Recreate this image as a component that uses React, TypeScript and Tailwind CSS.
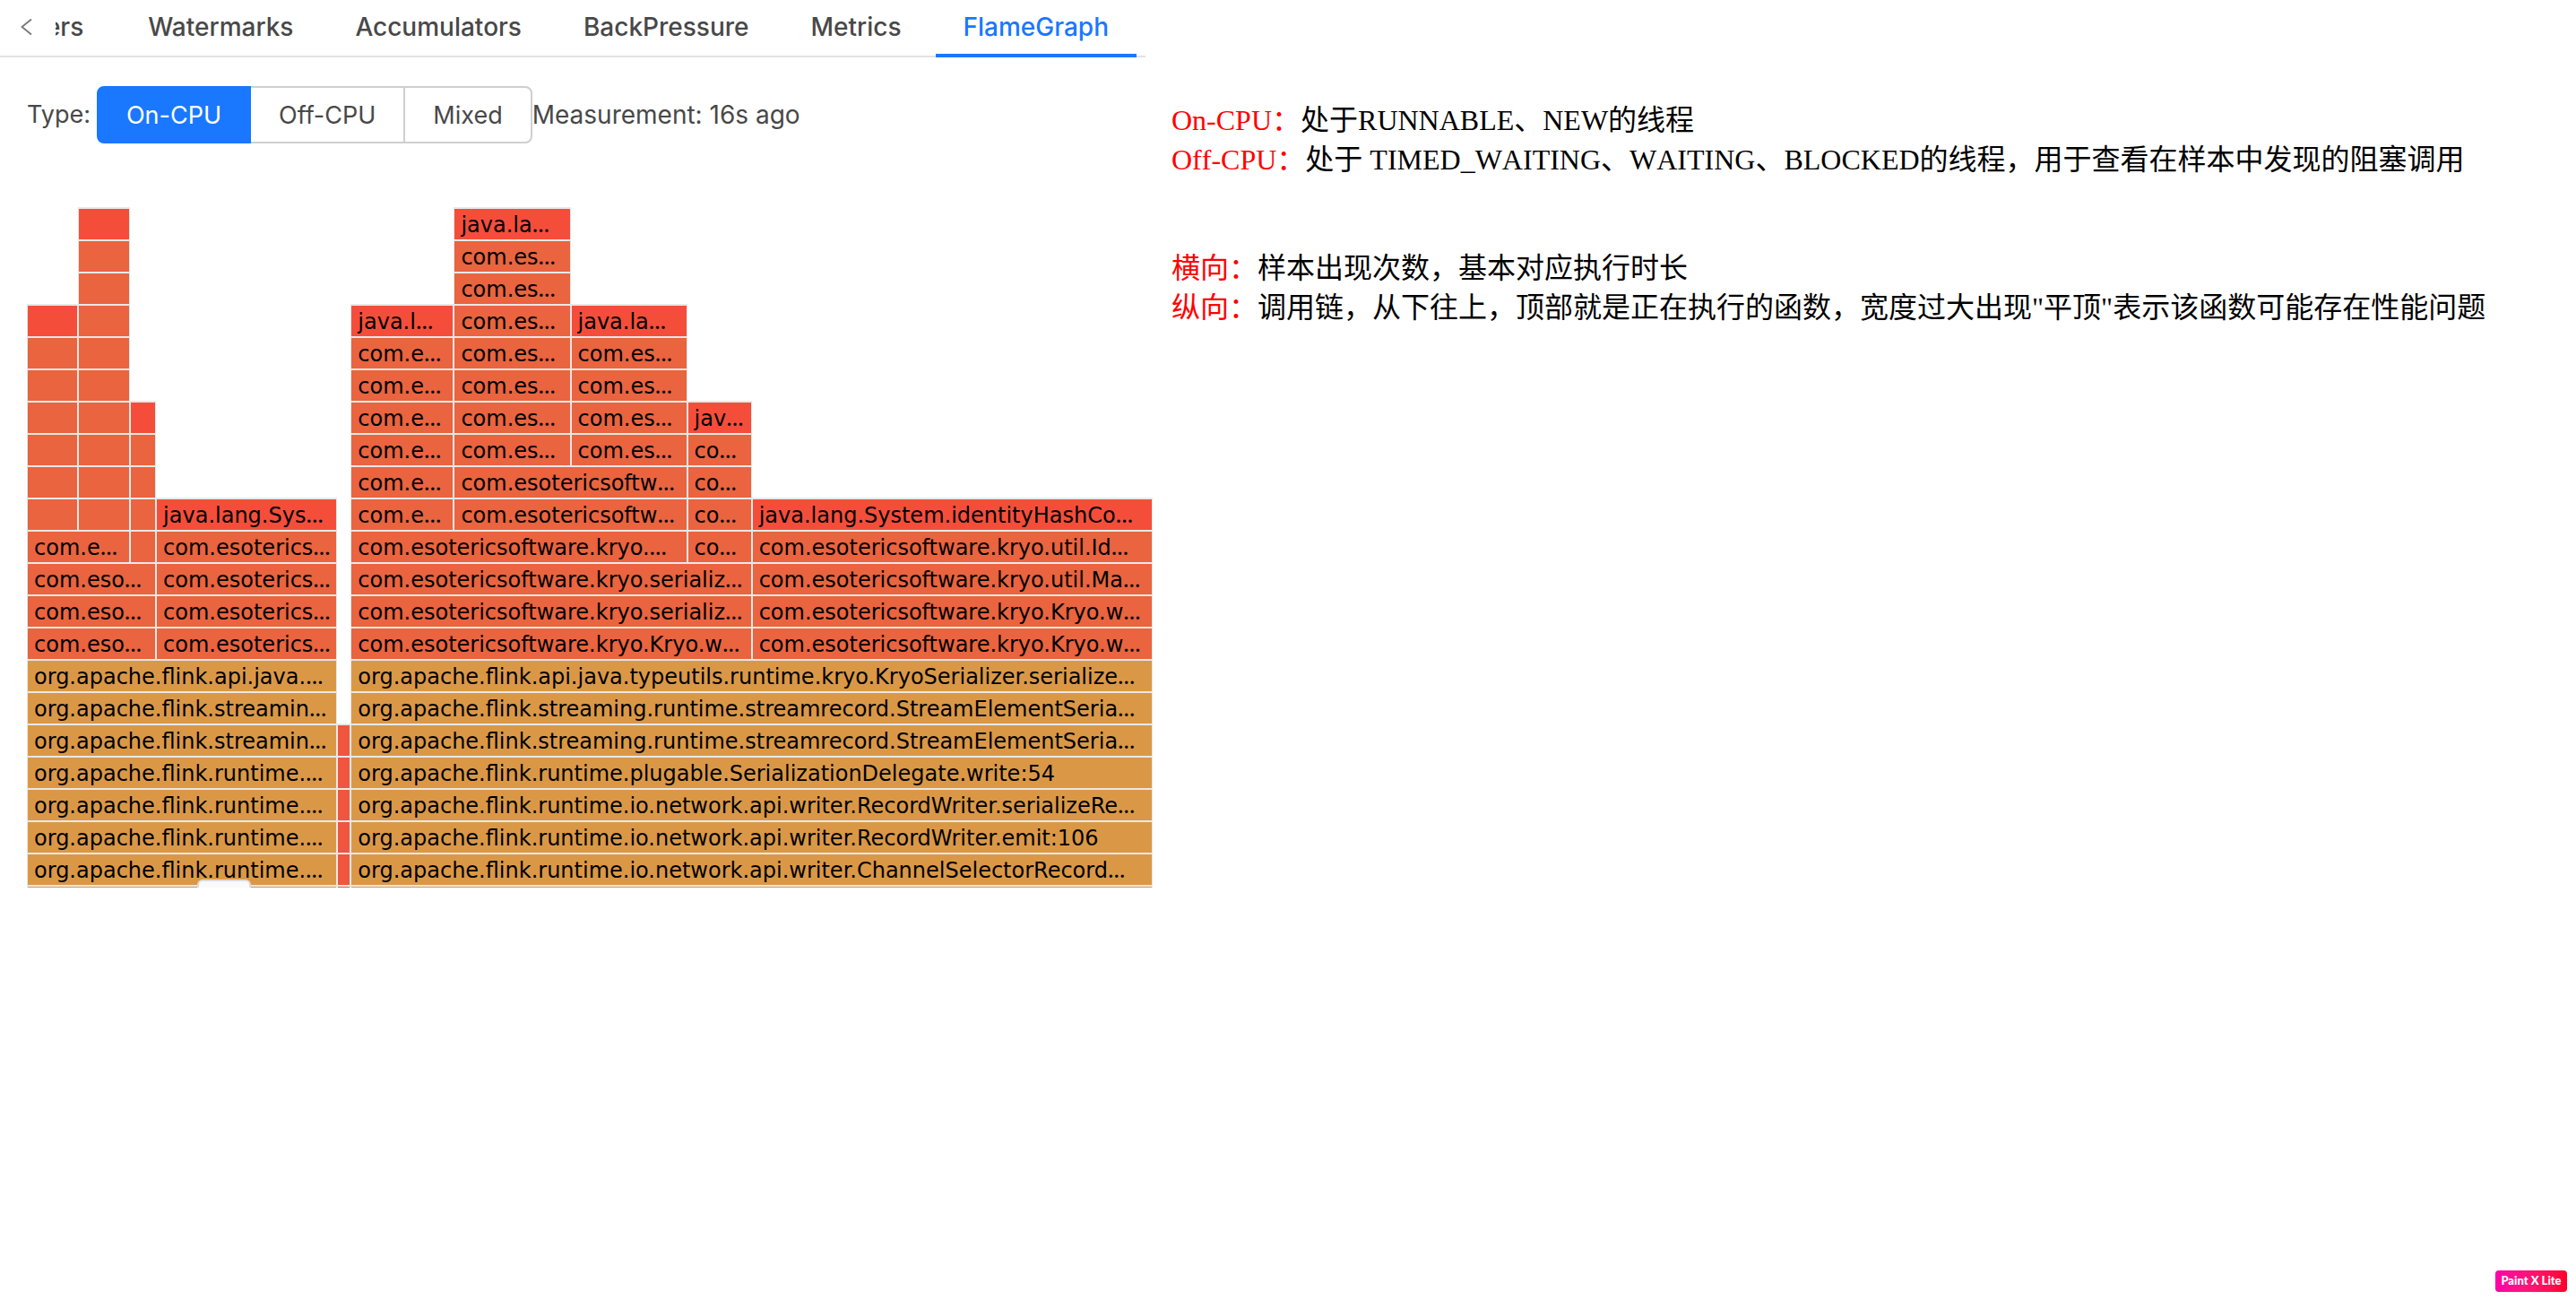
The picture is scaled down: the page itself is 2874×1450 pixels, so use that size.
import React, { useState } from 'react';

type Frame = {
  name: string;
  width: number;
  tone: 'red' | 'orange' | 'gold' | 'ember';
  children?: Frame[];
};

const TONES = {
  red: 'bg-[#f44e3b]',
  orange: 'bg-[#e9643f]',
  gold: 'bg-[#da9847]',
  ember: 'bg-[#f0553d]',
};

/* Builds a run of single-child frames, listed from the bottom of the stack to the top. */
function stack(width: number, frames: [Frame['tone'], string][], top: Frame[] = []): Frame {
  const [[tone, name], ...rest] = frames;
  return { name, width, tone, children: rest.length ? [stack(width, rest, top)] : top };
}

function times(n: number, frame: [Frame['tone'], string]): [Frame['tone'], string][] {
  return Array.from({ length: n }, () => frame);
}

const LEFT = stack(
  346,
  [
    ['gold', ''],
    ...times(4, ['gold', 'org.apache.flink.runtime.…']),
    ...times(2, ['gold', 'org.apache.flink.streamin…']),
    ['gold', 'org.apache.flink.api.java.…'],
  ],
  [
    stack(
      144,
      times(3, ['orange', 'com.eso…']),
      [
        stack(115, [['orange', 'com.e…']], [
          stack(57, [...times(6, ['orange', '']), ['red', '']]),
          stack(58, [...times(9, ['orange', '']), ['red', '']]),
        ]),
        stack(29, [...times(4, ['orange', '']), ['red', '']]),
      ],
    ),
    stack(202, [...times(4, ['orange', 'com.esoterics…']), ['red', 'java.lang.Sys…']]),
  ],
);

const MIDDLE = stack(15, times(6, ['ember', '']));

const RIGHT = stack(
  894,
  [
    ['gold', ''],
    ['gold', 'org.apache.flink.runtime.io.network.api.writer.ChannelSelectorRecord…'],
    ['gold', 'org.apache.flink.runtime.io.network.api.writer.RecordWriter.emit:106'],
    ['gold', 'org.apache.flink.runtime.io.network.api.writer.RecordWriter.serializeRe…'],
    ['gold', 'org.apache.flink.runtime.plugable.SerializationDelegate.write:54'],
    ...times(2, ['gold', 'org.apache.flink.streaming.runtime.streamrecord.StreamElementSeria…']),
    ['gold', 'org.apache.flink.api.java.typeutils.runtime.kryo.KryoSerializer.serialize…'],
  ],
  [
    stack(
      447,
      [
        ['orange', 'com.esotericsoftware.kryo.Kryo.w…'],
        ...times(2, ['orange', 'com.esotericsoftware.kryo.serializ…']),
      ],
      [
        stack(375, [['orange', 'com.esotericsoftware.kryo.…']], [
          stack(115, [...times(6, ['orange', 'com.e…']), ['red', 'java.l…']]),
          stack(260, times(2, ['orange', 'com.esotericsoftw…']), [
            stack(130, [...times(7, ['orange', 'com.es…']), ['red', 'java.la…']]),
            stack(130, [...times(4, ['orange', 'com.es…']), ['red', 'java.la…']]),
          ]),
        ]),
        stack(72, [...times(4, ['orange', 'co…']), ['red', 'jav…']]),
      ],
    ),
    stack(447, [
      ...times(2, ['orange', 'com.esotericsoftware.kryo.Kryo.w…']),
      ['orange', 'com.esotericsoftware.kryo.util.Ma…'],
      ['orange', 'com.esotericsoftware.kryo.util.Id…'],
      ['red', 'java.lang.System.identityHashCo…'],
    ]),
  ],
);

/* A frame's label; its ellipsis is set in a face with close-set dots. */
function FrameName({ name }: { name: string }) {
  if (!name.endsWith('…')) return <>{name}</>;
  return (
    <>
      {name.slice(0, -1)}
      <span className="font-['Noto_Sans',sans-serif] font-medium leading-none">…</span>
    </>
  );
}

function FrameStack({ frame }: { frame: Frame }) {
  return (
    <div className="flex min-w-0 flex-col" style={{ flex: `${frame.width} 1 0px` }}>
      {frame.children && frame.children.length > 0 && (
        <div className="flex items-end">
          {frame.children.map((child, i) => (
            <FrameStack key={i} frame={child} />
          ))}
        </div>
      )}
      <div
        className={`h-9 overflow-hidden border-x border-t-2 border-[#e8e8e8] pl-[7px] font-['Verdana','DejaVu_Sans',sans-serif] text-2xl leading-9 whitespace-nowrap text-black ${TONES[frame.tone]}`}
      >
        <FrameName name={frame.name} />
      </div>
    </div>
  );
}

function FlameGraph() {
  return (
    <div className="relative mt-[71px] ml-[30px] flex h-[759px] flex-col overflow-hidden">
      <div className="flex items-end">
        {[LEFT, MIDDLE, RIGHT].map((frame, i) => (
          <FrameStack key={i} frame={frame} />
        ))}
      </div>
      <div className="absolute bottom-0 left-[190px] h-[9px] w-[60px] rounded-t-md border-2 border-b-0 border-[#dcdcdc] bg-[#fafafa]" />
    </div>
  );
}

const TABS = ['Watermarks', 'Accumulators', 'BackPressure', 'Metrics', 'FlameGraph'];

function TabBar() {
  const [active, setActive] = useState('FlameGraph');
  return (
    <nav className="mr-2 flex h-16 border-b-2 border-[#e2e2e2] pr-[10px]">
      <button aria-label="Previous tabs" className="flex h-[60px] w-[62px] shrink-0 items-center pl-[22px] text-[#777]">
        <svg width="14" height="20" viewBox="0 0 14 20" fill="none" stroke="currentColor" strokeWidth="1.800">
          <path d="M13 1.500 2.500 10 13 18.500" />
        </svg>
      </button>
      <div role="tablist" className="flex min-w-0 flex-1 justify-end gap-[7px] overflow-x-clip text-[28px] font-medium">
        <button role="tab" aria-selected={false} className="h-16 border-b-4 border-transparent pr-[34px] text-[#484848]">
          ers
        </button>
        {TABS.map((tab) => (
          <button
            key={tab}
            role="tab"
            aria-selected={tab === active}
            onClick={() => setActive(tab)}
            className={`h-16 border-b-4 px-[31px] ${
              tab === active ? 'border-[#1a77ff] text-[#1a77ff]' : 'border-transparent text-[#484848]'
            }`}
          >
            {tab}
          </button>
        ))}
      </div>
    </nav>
  );
}

function TypePicker() {
  const [type, setType] = useState('On-CPU');
  return (
    <div className="mt-8 ml-[30px] flex h-16 items-center text-[27px] text-[#484848]">
      <span id="type-label" className="mr-[7px]">Type:</span>
      <div role="radiogroup" aria-labelledby="type-label" className="flex">
        {['On-CPU', 'Off-CPU', 'Mixed'].map((option) => (
          <label
            key={option}
            className={`-ml-[2px] flex h-16 items-center border-2 px-[31px] pt-[2px] first:ml-0 first:rounded-l-lg last:rounded-r-lg ${
              option === type ? 'z-10 border-[#1a77ff] bg-[#1a77ff] text-white' : 'border-[#cfcfcf] bg-white'
            }`}
          >
            <input
              type="radio"
              name="type"
              className="sr-only"
              checked={option === type}
              onChange={() => setType(option)}
            />
            {option}
          </label>
        ))}
      </div>
      <span className="text-[28px]">Measurement: 16s ago</span>
    </div>
  );
}

function Note({ term, children }: { term: string; children: React.ReactNode }) {
  return (
    <p>
      <span className="text-[#ff0000]">{term}：</span>
      {children}
    </p>
  );
}

function Notes() {
  return (
    <section
      lang="zh-CN"
      className="mt-28 pl-[21px] font-['Liberation_Serif','Noto_Sans_CJK_SC',serif] text-[32px] leading-[44px] text-black [font-kerning:none]"
    >
      <Note term="On-CPU">处于RUNNABLE、NEW的线程</Note>
      <Note term="Off-CPU">处于 TIMED_WAITING、WAITING、BLOCKED的线程，用于查看在样本中发现的阻塞调用</Note>
      <div className="mt-[77px]">
        <Note term="横向">样本出现次数，基本对应执行时长</Note>
        <Note term="纵向">调用链，从下往上，顶部就是正在执行的函数，宽度过大出现"平顶"表示该函数可能存在性能问题</Note>
      </div>
    </section>
  );
}

export default function App() {
  return (
    <div className="flex min-h-screen flex-col bg-white font-['Inter',sans-serif]">
      <main className="grid grid-cols-[1286fr_1588fr]">
        <div className="min-w-0">
          <TabBar />
          <TypePicker />
          <FlameGraph />
        </div>
        <Notes />
      </main>
      <div className="mt-auto mr-[10px] mb-[9px] flex h-6 w-20 items-center justify-center self-end rounded bg-linear-to-r from-[#ff00a8] to-[#ff0028] font-['Lato',sans-serif] text-[13px] font-black text-white">
        Paint X Lite
      </div>
    </div>
  );
}
